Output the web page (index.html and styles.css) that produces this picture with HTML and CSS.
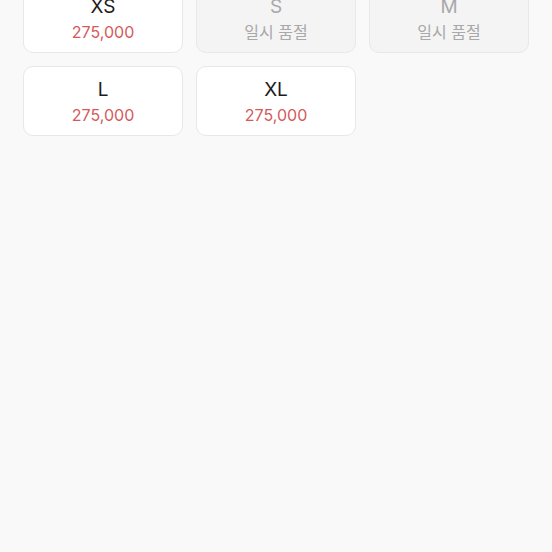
FILE: index.html
```html
<!DOCTYPE html>
<html lang="ko">
<head>
    <meta charset="UTF-8">
    <meta name="viewport" content="width=device-width, initial-scale=1.0">
    <title>사이즈 선택</title>
    <link rel="stylesheet" href="styles.css">
</head>
<body>
    <div class="size-grid">
        <div class="size-option">
            <span class="size-name">XS</span>
            <span class="size-price">275,000</span>
        </div>
        <div class="size-option soldout">
            <span class="size-name">S</span>
            <span class="size-price">일시 품절</span>
        </div>
        <div class="size-option soldout">
            <span class="size-name">M</span>
            <span class="size-price">일시 품절</span>
        </div>
        <div class="size-option">
            <span class="size-name">L</span>
            <span class="size-price">275,000</span>
        </div>
        <div class="size-option">
            <span class="size-name">XL</span>
            <span class="size-price">275,000</span>
        </div>
    </div>
</body>
</html>
```

FILE: styles.css
```css
body {
    font-family: Inter, "Noto Sans CJK KR", sans-serif;
    margin: 0;
    padding: 0;
    background: #f9f9f9;
    height: 100vh;
    overflow: hidden;
}

.size-grid {
    display: grid;
    grid-template-columns: repeat(3, 1fr);
    gap: 13px;
    padding: 0 23px;
    margin-top: -17px;
}

.size-option {
    height: 70px;
    box-sizing: border-box;
    background: #ffffff;
    border: 1px solid #e8e8e8;
    border-radius: 10px;
    display: flex;
    flex-direction: column;
    align-items: center;
    justify-content: center;
    gap: 3px;
    padding-top: 2px;
}

.size-name {
    font-size: 19px;
    line-height: 23px;
    color: #1c1c1c;
}

.size-price {
    font-size: 16px;
    line-height: 22px;
    color: #d45a5a;
}

.soldout {
    background: #f4f4f4;
}

.soldout .size-name,
.soldout .size-price {
    color: #a8a8a8;
}
```
